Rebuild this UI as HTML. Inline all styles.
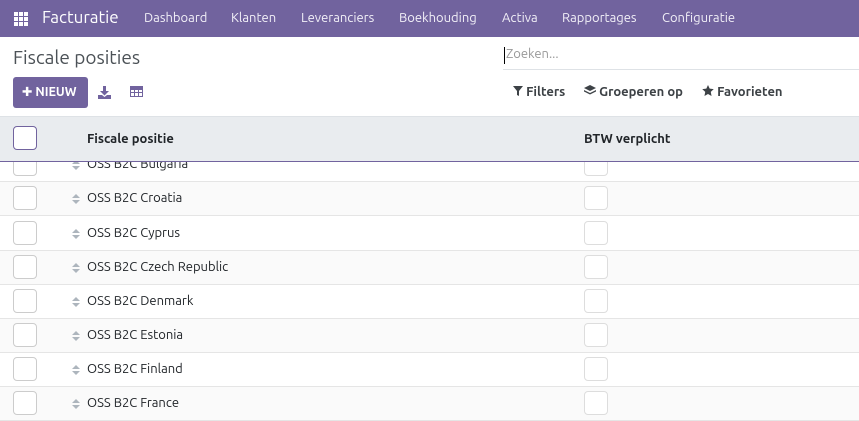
<!DOCTYPE html><html><head><meta charset="utf-8"><style>
*{box-sizing:border-box;margin:0;padding:0}
body{width:859px;height:419px;overflow:hidden;background:#fff;font-family:"Ubuntu","DejaVu Sans","Liberation Sans",sans-serif;color:#212529;position:relative}
.nav{position:absolute;left:0;top:0;width:859px;height:37px;background:#71639e;color:#fff}
.nav span{position:absolute;top:11px;font-size:13px;color:#f1eff7}
.rows{position:absolute;left:0;top:0;width:859px}
.row{position:absolute;left:0;width:859px;height:34px;border-bottom:1px solid #e5e5e5;font-size:13px}
.cb{position:absolute;left:13px;top:4px;width:24px;height:24px;border:1px solid #ccc;border-radius:4px;background:#fff}
.cb2{position:absolute;left:584px;top:4px;width:24px;height:24px;border:1px solid #ddd;border-radius:4px;background:#fff}
.h{position:absolute;left:72px;top:10px;width:8px;height:14px}
.t{position:absolute;left:87px;top:9px}
</style></head><body>
<div class="rows">
<div class="row" style="top:148px;background:#fff"><div class="cb"></div><svg class="h" viewBox="0 0 8 14"><path d="M0 6L4 2L8 6ZM0 8L4 12L8 8Z" fill="#adb5bd"/></svg><div class="t">OSS B2C Bulgaria</div><div class="cb2"></div></div>
<div class="row" style="top:182px;background:#fafafa"><div class="cb"></div><svg class="h" viewBox="0 0 8 14"><path d="M0 6L4 2L8 6ZM0 8L4 12L8 8Z" fill="#adb5bd"/></svg><div class="t">OSS B2C Croatia</div><div class="cb2"></div></div>
<div class="row" style="top:216.5px;background:#fff"><div class="cb"></div><svg class="h" viewBox="0 0 8 14"><path d="M0 6L4 2L8 6ZM0 8L4 12L8 8Z" fill="#adb5bd"/></svg><div class="t">OSS B2C Cyprus</div><div class="cb2"></div></div>
<div class="row" style="top:250.5px;background:#fafafa"><div class="cb"></div><svg class="h" viewBox="0 0 8 14"><path d="M0 6L4 2L8 6ZM0 8L4 12L8 8Z" fill="#adb5bd"/></svg><div class="t">OSS B2C Czech Republic</div><div class="cb2"></div></div>
<div class="row" style="top:284.5px;background:#fff"><div class="cb"></div><svg class="h" viewBox="0 0 8 14"><path d="M0 6L4 2L8 6ZM0 8L4 12L8 8Z" fill="#adb5bd"/></svg><div class="t">OSS B2C Denmark</div><div class="cb2"></div></div>
<div class="row" style="top:318.5px;background:#fafafa"><div class="cb"></div><svg class="h" viewBox="0 0 8 14"><path d="M0 6L4 2L8 6ZM0 8L4 12L8 8Z" fill="#adb5bd"/></svg><div class="t">OSS B2C Estonia</div><div class="cb2"></div></div>
<div class="row" style="top:353px;background:#fff"><div class="cb"></div><svg class="h" viewBox="0 0 8 14"><path d="M0 6L4 2L8 6ZM0 8L4 12L8 8Z" fill="#adb5bd"/></svg><div class="t">OSS B2C Finland</div><div class="cb2"></div></div>
<div class="row" style="top:387px;background:#fafafa"><div class="cb"></div><svg class="h" viewBox="0 0 8 14"><path d="M0 6L4 2L8 6ZM0 8L4 12L8 8Z" fill="#adb5bd"/></svg><div class="t">OSS B2C France</div><div class="cb2"></div></div>
</div>
<div style="position:absolute;left:0;top:37px;width:859px;height:80px;background:#fff"></div>
<div style="position:absolute;left:0;top:116px;width:859px;height:46px;background:#e9ecef;border-top:1px solid #dee2e6;border-bottom:1px solid #71639e">
<div style="position:absolute;left:13px;top:9px;width:24px;height:24px;border:1px solid #71639e;border-radius:4px;background:#fff"></div>
<div style="position:absolute;left:87px;top:15px;font-size:13px;font-weight:bold">Fiscale positie</div>
<div style="position:absolute;left:584px;top:15px;font-size:13px;font-weight:bold">BTW verplicht</div>
</div>
<div class="nav">
<svg style="position:absolute;left:14px;top:12px" width="14" height="14" viewBox="0 0 14 14" fill="#fff"><rect x="0" y="0" width="4" height="4"/><rect x="5" y="0" width="4" height="4"/><rect x="10" y="0" width="4" height="4"/><rect x="0" y="5" width="4" height="4"/><rect x="5" y="5" width="4" height="4"/><rect x="10" y="5" width="4" height="4"/><rect x="0" y="10" width="4" height="4"/><rect x="5" y="10" width="4" height="4"/><rect x="10" y="10" width="4" height="4"/></svg>
<span style="left:42px;top:8px;font-size:17px;color:#fff">Facturatie</span>
<span style="left:144px">Dashboard</span><span style="left:231px">Klanten</span><span style="left:301px">Leveranciers</span><span style="left:399px">Boekhouding</span><span style="left:502px">Activa</span><span style="left:562px">Rapportages</span><span style="left:662px">Configuratie</span>
</div>
<div style="position:absolute;left:13px;top:46px;font-size:19px;color:#4c5257">Fiscale posities</div>
<div style="position:absolute;left:13px;top:77px;width:75px;height:31px;background:#71639e;border-radius:3px;color:#fff;font-size:12.5px;font-weight:bold;line-height:31px;padding-left:9px">✚ NIEUW</div>
<svg style="position:absolute;left:98px;top:86px" width="13" height="13" viewBox="0 0 13 13"><path d="M5 0h3v5h3L6.5 9.5 2 5h3z M0 9h4l2.5 2 2.5-2h4v4H0z" fill="#71639e"/></svg>
<svg style="position:absolute;left:130px;top:86px" width="13" height="11" viewBox="0 0 13 11"><rect x="0.5" y="0.5" width="12" height="10" fill="none" stroke="#71639e"/><path d="M0 3.5h13M0 6.5h13M4.5 3v8M8.5 3v8" stroke="#71639e"/><rect x="0" y="0" width="13" height="3" fill="#71639e"/></svg>
<div style="position:absolute;left:504px;top:47px;width:1px;height:17px;background:#000"></div>
<div style="position:absolute;left:506px;top:47px;font-size:13px;color:#999">Zoeken...</div>
<div style="position:absolute;left:503px;top:69px;width:356px;height:1px;background:#dee2e6"></div>
<div style="position:absolute;left:513px;top:85px;font-size:13px;font-weight:bold;color:#3d4246">
<span style="position:absolute;left:0;white-space:nowrap"><svg width="10" height="10" viewBox="0 0 10 10"><path d="M0 0h10L6 5v5L4 9V5z" fill="#3d4246"/></svg> Filters</span>
<span style="position:absolute;left:71px;white-space:nowrap"><svg width="12" height="11" viewBox="0 0 12 11"><path d="M6 0l6 3-6 3-6-3z M0 5l6 3 6-3v1.5L6 9.5 0 6.5z" fill="#3d4246"/></svg> Groeperen op</span>
<span style="position:absolute;left:189px;white-space:nowrap"><svg width="12" height="11" viewBox="0 0 24 23"><path d="M12 0l3.5 7.5 8.5 1-6.2 5.8 1.6 8.7L12 18.8 4.6 23l1.6-8.7L0 8.5l8.5-1z" fill="#3d4246"/></svg> Favorieten</span>
</div>
</body></html>
